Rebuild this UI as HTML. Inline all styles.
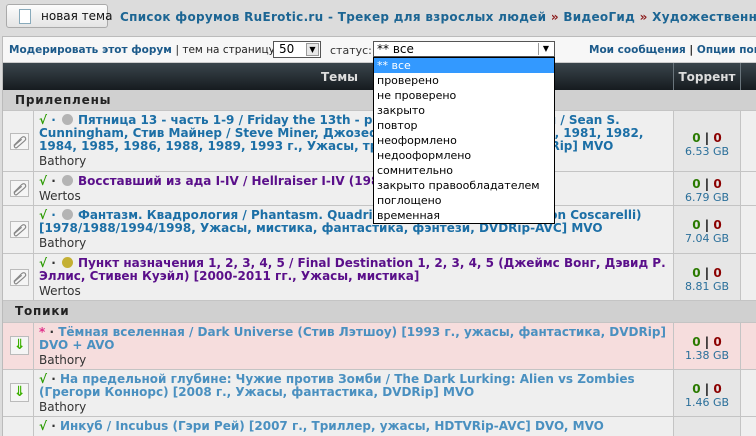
<!DOCTYPE html>
<html><head><meta charset="utf-8"><style>
*{margin:0;padding:0;box-sizing:border-box}
body{width:756px;height:424px;overflow:hidden;background:#dcdcdc;font-family:"DejaVu Sans","Liberation Sans",sans-serif;font-size:11px;position:relative}
.a{position:absolute}
.btn{left:6px;top:4px;width:102px;height:24px;border:1px solid #aaa;border-radius:3px;background:linear-gradient(#fdfdfd,#e4e4e4);font-size:12px;color:#111;white-space:nowrap}
.crumb{left:120px;top:10px;width:636px;overflow:hidden;font-size:12px;font-weight:bold;color:#1c6593;white-space:nowrap;letter-spacing:.3px}
.crumb b{color:#8b1a1a}
.panel{left:2px;top:36px;width:754px;height:400px;background:#efefef;border-left:1px solid #bbb;border-top:1px solid #bbb}
.tool{left:3px;top:37px;width:753px;height:26px;background:#f7f7f7;border-bottom:1px solid #ccc}
.tl{font-size:10.5px;font-weight:bold;color:#1c5a8a;white-space:nowrap}
.hdr{left:3px;top:63px;width:753px;height:27px;background:linear-gradient(#3a454c,#161b1f);color:#ddd;font-weight:bold;font-size:12px;overflow:hidden}
.sec{left:3px;top:90px;width:753px;height:20px;background:#d0d0d0;font-weight:bold;font-size:12px;color:#222;letter-spacing:.8px}
.row{left:3px;width:753px;background:#efefef;border-top:1px solid #c4c4c4;overflow:hidden}
.ic{position:absolute;left:0;top:0;bottom:0;width:31px;border-right:1px solid #c4c4c4}
.tc{position:absolute;left:670px;top:0;bottom:0;width:68px;border-left:1px solid #c4c4c4;border-right:1px solid #c4c4c4;text-align:center;background:#e6e6e6}
.tt{position:absolute;left:36px;top:3px;width:634px;line-height:13px;font-weight:bold;color:#1c6fa6;font-size:12px;white-space:nowrap;overflow:hidden}
.tt.p{color:#5a0f8a}
.au{font-weight:normal;color:#333;display:block;margin-top:2px;font-size:12px}
.ck{color:#2a9a00;font-weight:bold}
.dot{display:inline-block;width:11px;height:11px;border-radius:50%;background:#b4b4b4;vertical-align:-1px;margin:0 5px 0 2px}
.st{font-weight:bold;font-size:12px}
.st .g{color:#2a7a00}.st .r{color:#8b0000}
.sz{color:#2a6f9a;font-size:11px}
.clip{position:absolute;left:7px;width:19px;height:17px;border:1px solid #bbb;background:#f5f5f5}
.dl{position:absolute;left:7px;width:19px;height:19px;border:1px solid #bbb;background:#f5f5f5;color:#3cb000;font-size:14px;text-align:center;line-height:17px;font-weight:bold}
.sel{left:373px;top:41px;width:182px;height:16px;border:1px solid #555;background:#fff;font-size:12px;padding-left:3px;line-height:14px}
.list{left:373px;top:57px;width:182px;height:167px;border:1px solid #000;background:#fff;font-size:11px}
.list div{height:15px;line-height:15px;padding-left:3px;color:#000}
</style></head><body>
<svg width="0" height="0" style="position:absolute"><symbol id="pc" viewBox="0 0 19 17"><path d="M3 13 L12 4 Q14.5 2 16 4 Q17.5 6 15 8 L7 15 Q5 16.5 4 15 Q3 13.5 5 12 L12 6" fill="none" stroke="#888" stroke-width="1.3"/></symbol></svg>
<div class="a btn"><span style="position:absolute;left:12px;top:4px;width:12px;height:15px;border:1px solid #8ab;background:#fff"></span><span style="position:absolute;left:34px;top:4px">новая тема</span></div>
<div class="a crumb">Список форумов RuErotic.ru - Трекер для взрослых людей <b>»</b> ВидеоГид <b>»</b> Художественные фильмы</div>
<div class="a panel"></div>
<div class="a tool"></div>
<div class="a tl" style="left:9px;top:44px">Модерировать этот форум <span style="color:#222;font-weight:normal">| тем на страницу:</span></div>
<div class="a" style="left:273px;top:41px;width:48px;height:17px;border:1px solid #555;background:#fff;font-size:12px;padding-left:5px">50<span style="position:absolute;right:1px;top:1px;width:13px;height:13px;background:#e8e8e8;border:1px solid #999;font-size:8px;text-align:center;line-height:12px">▼</span></div>
<div class="a" style="left:330px;top:44px;color:#333">статус:</div>
<div class="a sel">** все<span style="position:absolute;right:1px;top:1px;width:15px;height:12px;font-size:8px;text-align:center;line-height:12px;border-left:1px solid #999">▼</span></div>
<div class="a tl" style="left:589px;top:44px;width:167px;overflow:hidden">Мои сообщения <span style="color:#222">|</span> Опции показа</div>
<div class="a hdr"><span style="position:absolute;left:318px;top:7px">Темы</span><span style="position:absolute;left:670px;top:0;bottom:0;width:68px;border-left:1px solid #6a757c;border-right:1px solid #6a757c;text-align:center;padding-top:7px">Торрент</span></div>
<div class="a sec"><span style="position:absolute;left:12px;top:3px">Прилеплены</span></div>

<div class="a row" style="top:110px;height:61px"><div class="ic"><svg class="clip" style="top:22px"><use href="#pc"/></svg></div><div class="tt"><span class="ck">√</span> · <span class="dot"></span>Пятница 13 - часть 1-9 / Friday the 13th - part 1-9 (Шон С. Каннингем / Sean S.<br>Cunningham, Стив Майнер / Steve Miner, Джозеф Зито / Joseph Zito) [1980, 1981, 1982,<br>1984, 1985, 1986, 1988, 1989, 1993 г., Ужасы, триллер, DVDRip-AVC, DVDRip] MVO<span class="au">Bathory</span></div><div class="tc"><div class="st" style="margin-top:20px"><span class="g">0</span> | <span class="r">0</span></div><div class="sz">6.53 GB</div></div></div>
<div class="a row" style="top:171px;height:34px"><div class="ic"><svg class="clip" style="top:8px"><use href="#pc"/></svg></div><div class="tt p"><span class="ck">√</span> <span style="color:#333">·</span> <span class="dot"></span>Восставший из ада I-IV / Hellraiser I-IV (1987-1996)<span class="au">Wertos</span></div><div class="tc"><div class="st" style="margin-top:5px"><span class="g">0</span> | <span class="r">0</span></div><div class="sz">6.79 GB</div></div></div>
<div class="a row" style="top:205px;height:48px"><div class="ic"><svg class="clip" style="top:15px"><use href="#pc"/></svg></div><div class="tt"><span class="ck">√</span> · <span class="dot"></span>Фантазм. Квадрология / Phantasm. Quadrilogy (Дон Коскарелли / Don Coscarelli)<br>[1978/1988/1994/1998, Ужасы, мистика, фантастика, фэнтези, DVDRip-AVC] MVO<span class="au">Bathory</span></div><div class="tc"><div class="st" style="margin-top:12px"><span class="g">0</span> | <span class="r">0</span></div><div class="sz">7.04 GB</div></div></div>
<div class="a row" style="top:253px;height:47px"><div class="ic"><svg class="clip" style="top:15px"><use href="#pc"/></svg></div><div class="tt p"><span class="ck">√</span> <span style="color:#333">·</span> <span class="dot" style="background:#c4b034"></span>Пункт назначения 1, 2, 3, 4, 5 / Final Destination 1, 2, 3, 4, 5 (Джеймс Вонг, Дэвид Р.<br>Эллис, Стивен Куэйл) [2000-2011 гг., Ужасы, мистика]<span class="au">Wertos</span></div><div class="tc"><div class="st" style="margin-top:12px"><span class="g">0</span> | <span class="r">0</span></div><div class="sz">8.81 GB</div></div></div>
<div class="a sec" style="top:300px;height:22px;border-top:1px solid #c4c4c4"><span style="position:absolute;left:12px;top:3px">Топики</span></div>
<div class="a row" style="top:322px;height:47px;background:#f6dddd"><div class="ic"><div class="dl" style="top:13px">⇓</div></div><div class="tt" style="color:#4a90c0"><span style="color:#e0308a">*</span> <span style="color:#333">·</span> Тёмная вселенная / Dark Universe (Стив Лэтшоу) [1993 г., ужасы, фантастика, DVDRip]<br>DVO + AVO<span class="au">Bathory</span></div><div class="tc" style="background:#f6dddd"><div class="st" style="margin-top:12px"><span class="g">0</span> | <span class="r">0</span></div><div class="sz">1.38 GB</div></div></div>
<div class="a row" style="top:369px;height:47px"><div class="ic"><div class="dl" style="top:13px">⇓</div></div><div class="tt" style="color:#4a90c0"><span class="ck">√</span> <span style="color:#333">·</span> На предельной глубине: Чужие против Зомби / The Dark Lurking: Alien vs Zombies<br>(Грегори Коннорс) [2008 г., Ужасы, фантастика, DVDRip] MVO<span class="au">Bathory</span></div><div class="tc"><div class="st" style="margin-top:12px"><span class="g">0</span> | <span class="r">0</span></div><div class="sz">1.46 GB</div></div></div>
<div class="a row" style="top:416px;height:20px"><div class="ic"></div><div class="tt" style="color:#4a90c0"><span class="ck">√</span> <span style="color:#333">·</span> Инкуб / Incubus (Гэри Рей) [2007 г., Триллер, ужасы, HDTVRip-AVC] DVO, MVO</div><div class="tc"></div></div>

<div class="a list">
<div style="background:#3399ff;color:#fff">** все</div>
<div>проверено</div><div>не проверено</div><div>закрыто</div><div>повтор</div><div>неоформлено</div><div>недооформлено</div><div>сомнительно</div><div>закрыто правообладателем</div><div>поглощено</div><div>временная</div>
</div>
</body></html>
